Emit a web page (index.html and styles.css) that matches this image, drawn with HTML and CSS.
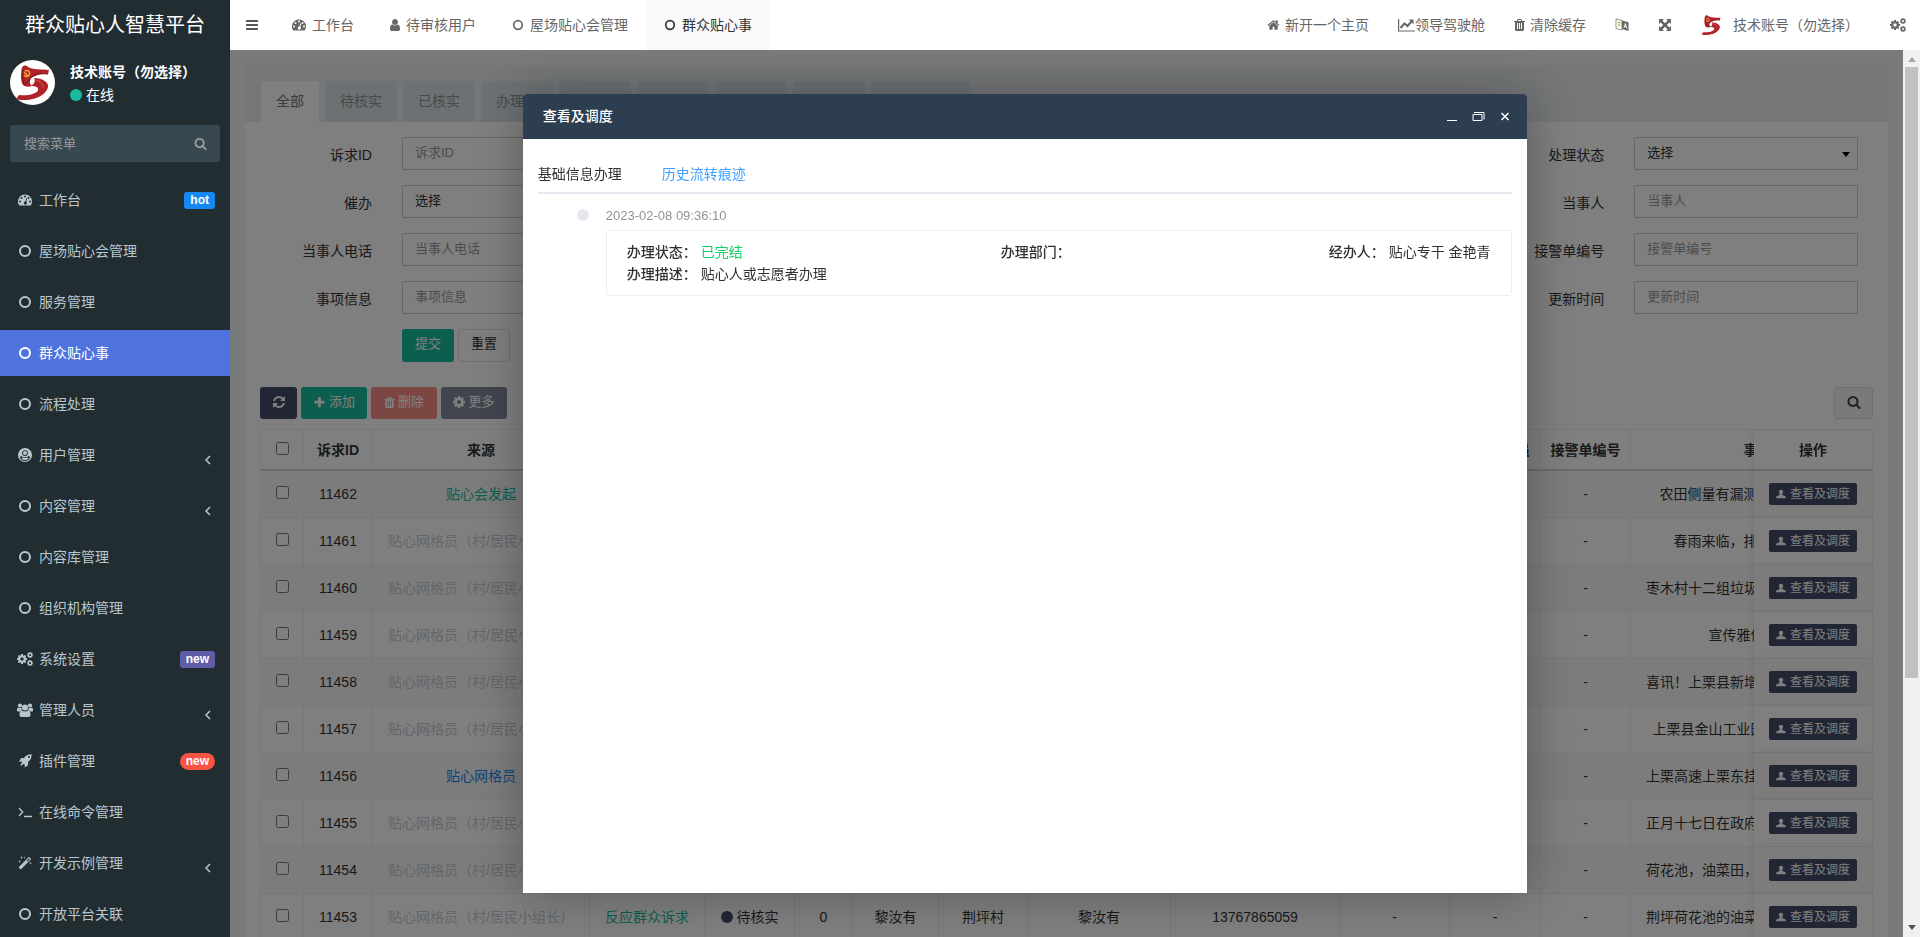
FILE: index.html
```html
<!DOCTYPE html>
<html lang="zh-CN">
<head>
<meta charset="utf-8">
<title>群众贴心人智慧平台</title>
<link rel="stylesheet" href="styles.css">
</head>
<body>
<svg class="sprite" aria-hidden="true">
  <symbol id="i-bars" viewBox="0 0 1792 1792"><path d="M1664 1344v128q0 26-19 45t-45 19h-1408q-26 0-45-19t-19-45v-128q0-26 19-45t45-19h1408q26 0 45 19t19 45zm0-512v128q0 26-19 45t-45 19h-1408q-26 0-45-19t-19-45v-128q0-26 19-45t45-19h1408q26 0 45 19t19 45zm0-512v128q0 26-19 45t-45 19h-1408q-26 0-45-19t-19-45v-128q0-26 19-45t45-19h1408q26 0 45 19t19 45z"/></symbol>
  <symbol id="i-search" viewBox="0 0 1792 1792"><path d="M1216 832q0-185-131.500-316.500t-316.500-131.500-316.500 131.500-131.500 316.500 131.500 316.500 316.500 131.500 316.500-131.500 131.500-316.500zm512 832q0 52-38 90t-90 38q-54 0-90-38l-343-342q-179 124-399 124-143 0-273.500-55.500t-225-150-150-225-55.500-273.500 55.500-273.500 150-225 225-150 273.500-55.500 273.500 55.500 225 150 150 225 55.500 273.500q0 220-124 399l343 343q37 37 37 90z"/></symbol>
  <symbol id="i-home" viewBox="0 0 1792 1792"><path d="M1472 992v480q0 26-19 45t-45 19h-384v-384h-256v384h-384q-26 0-45-19t-19-45v-480q0-1 .5-3t.5-3l575-474 575 474q1 2 1 6zm223-69l-62 74q-8 9-21 11h-3q-13 0-21-7l-692-577-692 577q-12 8-24 7-13-2-21-11l-62-74q-8-10-7-23.500t11-21.500l719-599q32-26 76-26t76 26l244 204v-195q0-14 9-23t23-9h192q14 0 23 9t9 23v408l219 182q10 8 11 21.500t-7 23.500z"/></symbol>
  <symbol id="i-plus" viewBox="0 0 1792 1792"><path d="M1600 736v192q0 40-28 68t-68 28h-416v416q0 40-28 68t-68 28h-192q-40 0-68-28t-28-68v-416h-416q-40 0-68-28t-28-68v-192q0-40 28-68t68-28h416v-416q0-40 28-68t68-28h192q40 0 68 28t28 68v416h416q40 0 68 28t28 68z"/></symbol>
  <symbol id="i-trash" viewBox="192 0 1408 1792"><path d="M704 1376v-704q0-14-9-23t-23-9h-64q-14 0-23 9t-9 23v704q0 14 9 23t23 9h64q14 0 23-9t9-23zm256 0v-704q0-14-9-23t-23-9h-64q-14 0-23 9t-9 23v704q0 14 9 23t23 9h64q14 0 23-9t9-23zm256 0v-704q0-14-9-23t-23-9h-64q-14 0-23 9t-9 23v704q0 14 9 23t23 9h64q14 0 23-9t9-23zm-544-992h448l-48-117q-7-9-17-11h-317q-10 2-17 11zm928 32v64q0 14-9 23t-23 9h-96v948q0 83-47 143.500t-113 60.500h-832q-66 0-113-58.500t-47-141.500v-952h-96q-14 0-23-9t-9-23v-64q0-14 9-23t23-9h309l70-167q15-37 54-63t79-26h320q40 0 79 26t54 63l70 167h309q14 0 23 9t9 23z"/></symbol>
  <symbol id="i-cog" viewBox="128 128 1536 1536"><path d="M1152 896q0-106-75-181t-181-75-181 75-75 181 75 181 181 75 181-75 75-181zm512-109v222q0 12-8 23t-20 13l-185 28q-19 54-39 91 35 50 107 138 10 12 10 25t-9 23q-27 37-99 108t-94 71q-12 0-26-9l-138-108q-44 23-91 38-16 136-29 186-7 28-36 28h-222q-14 0-24.500-8.500t-11.500-21.500l-28-184q-49-16-90-37l-141 107q-10 9-25 9-14 0-25-11-126-114-165-168-7-10-7-23 0-12 8-23 15-21 51-66.500t54-70.500q-27-50-41-99l-183-27q-13-2-21-12.500t-8-23.500v-222q0-12 8-23t19-13l186-28q14-46 39-92-40-57-107-138-10-12-10-24 0-10 9-23 26-36 98.500-107.500t94.500-71.500q13 0 26 10l138 107q44-23 91-38 16-136 29-186 7-28 36-28h222q14 0 24.500 8.500t11.500 21.500l28 184q49 16 90 37l142-107q9-9 24-9 13 0 25 10 129 119 165 170 7 8 7 22 0 12-8 23-15 21-51 66.500t-54 70.500q26 50 41 98l183 28q13 2 21 12.500t8 23.500z"/></symbol>
  <symbol id="i-cogs" viewBox="0 0 16 14"><use href="#i-cog" x="0" y="2" width="10" height="10"/><use href="#i-cog" x="10" y="0" width="6" height="6"/><use href="#i-cog" x="10" y="8" width="6" height="6"/></symbol>
  <symbol id="i-refresh" viewBox="128 128 1536 1536"><path d="M1639 1056q0 5-1 7-64 268-268 434.500t-478 166.500q-146 0-282.500-55t-243.500-157l-129 129q-19 19-45 19t-45-19-19-45v-448q0-26 19-45t45-19h448q26 0 45 19t19 45-19 45l-137 137q71 66 161 102t187 36q134 0 250-65t186-179q11-17 53-117 8-23 30-23h192q13 0 22.500 9.500t9.500 22.500zm25-800v448q0 26-19 45t-45 19h-448q-26 0-45-19t-19-45 19-45l138-138q-148-137-349-137-134 0-250 65t-186 179q-11 17-53 117-8 23-30 23h-199q-13 0-22.500-9.500t-9.500-22.500v-7q65-268 270-434.500t480-166.500q146 0 284 55.500t245 156.500l130-129q19-19 45-19t45 19 19 45z"/></symbol>
  <symbol id="i-user" viewBox="256 0 1280 1792"><path d="M1536 1399q0 109-62.500 187t-150.500 78h-854q-88 0-150.500-78t-62.500-187q0-85 8.500-160.500t31.500-152 58.500-131 94-89 134.500-34.500q131 128 313 128t313-128q76 0 134.500 34.500t94 89 58.500 131 31.500 152 8.500 160.500zm-256-887q0 159-112.500 271.500t-271.500 112.500-271.500-112.500-112.500-271.500 112.500-271.500 271.500-112.500 271.500 112.500 112.500 271.500z"/></symbol>
  <symbol id="i-person" viewBox="0 0 14 14"><path d="M7 1a3 3 0 0 1 3 3c0 1.500-.8 2.300-1.200 3-.3.700 0 1.300.8 1.600L13 10c.6.300.8.800.8 1.500V13H.2v-1.500C.2 10.800.5 10.300 1 10l3.400-1.400c.8-.3 1.100-.9.800-1.600C4.800 6.300 4 5.500 4 4a3 3 0 0 1 3-3z"/></symbol>
  <symbol id="i-circle" viewBox="0 0 14 14"><circle cx="7" cy="7" r="5" fill="none" stroke="currentColor" stroke-width="2"/></symbol>
  <symbol id="i-dash" viewBox="0 0 14 14"><path fill-rule="evenodd" d="M7 1.500a7 7 0 0 1 7 7c0 1.400-.4 2.700-1.100 3.800-.2.200-.4.300-.6.300H1.700c-.2 0-.4-.1-.6-.3A7 7 0 0 1 7 1.500zM2 7.500a1 1 0 1 0 0 2 1 1 0 0 0 0-2zM3.500 4a1 1 0 1 0 0 2 1 1 0 0 0 0-2zM7 2.500a1 1 0 1 0 0 2 1 1 0 0 0 0-2zM10.500 4a1 1 0 1 0 0 2 1 1 0 0 0 0-2zM12 7.500a1 1 0 1 0 0 2 1 1 0 0 0 0-2zM8.300 5.300l-.9 3.300a1.500 1.500 0 1 0 .9.300l.8-3.300z"/></symbol>
  <symbol id="i-usercircle" viewBox="0 0 14 14"><path fill-rule="evenodd" d="M7 0a7 7 0 1 1 0 14A7 7 0 0 1 7 0zM3.300 7.800c-.8.500-1.200 1.300-1.300 2.300a5.800 5.800 0 0 0 10 0c-.1-1-.5-1.800-1.300-2.300A4 4 0 0 1 7 9.300a4 4 0 0 1-3.700-1.500zM7 2.200a2.900 2.900 0 1 0 0 5.800 2.900 2.900 0 0 0 0-5.800z"/><circle cx="7" cy="5.100" r="2"/><path d="M3.500 10.500c.4-.8 1-1 1.500-1 1.200.8 2.800.8 4 0 .5 0 1.100.2 1.500 1a4.700 4.700 0 0 1-7 0z"/></symbol>
  <symbol id="i-users" viewBox="0 0 16 14"><circle cx="3" cy="2.500" r="2.100"/><circle cx="13" cy="2.500" r="2.100"/><circle cx="8" cy="4.500" r="3"/><path d="M0 8V6.500C0 5.300.7 4.500 1.500 4.500c1 .7 1.800.7 2.900.3 0 1.200.2 1.700.7 2.400-1 0-1.800.4-2.300 1.200H1.300C.5 8.400 0 8.500 0 8zM16 8V6.500c0-1.200-.7-2-1.500-2-1 .7-1.800.7-2.900.3 0 1.200-.2 1.700-.7 2.400 1 0 1.800.4 2.300 1.200h1.500c.8 0 1.300.1 1.300-.4zM2.500 12c0-2.500.6-4.500 2.500-4.500 1.800 1.400 4.200 1.400 6 0 1.900 0 2.500 2 2.500 4.500 0 1.200-.8 2-2 2h-7c-1.200 0-2-.8-2-2z"/></symbol>
  <symbol id="i-rocket" viewBox="0 0 14 14"><path fill-rule="evenodd" d="M13.600.3C10 .2 8 1.300 6 4L3 4.300.8 7.700l2.800-.2.400.9-1.600 2.800.6.600 2.700-1.700 1 .4.100 3 3.300-2.300L10 8c2.700-2 3.800-4.200 3.600-7.700zM11 2a1 1 0 1 1 0 2 1 1 0 0 1 0-2z"/></symbol>
  <symbol id="i-terminal" viewBox="0 0 14 14"><path d="M1 3l3.700 4L1 11M6 11.500h8" fill="none" stroke="currentColor" stroke-width="1.300"/></symbol>
  <symbol id="i-magic" viewBox="0 0 14 14"><path fill-rule="evenodd" d="M11 .8l2.200 2.200L2.800 13.400.6 11.200zM11 2.200L8.500 4.700l.8.800L11.800 3zM3.500 0l.4 1.200 1.200.4-1.200.4-.4 1.200L3.100 2l-1.200-.4 1.200-.4zM6.800.5l.3.900.9.300-.9.300-.3.900-.3-.9-.9-.3.900-.3zM1.700 4l.4 1 1 .4-1 .4-.4 1-.4-1-1-.4 1-.4zM12.500 5.500l.3 1.200 1.200.4-1.200.4-.3 1.200-.4-1.200-1.100-.4 1.100-.4z"/></symbol>
  <symbol id="i-left" viewBox="0 0 8 12"><path d="M6 2L2 6l4 4" fill="none" stroke="currentColor" stroke-width="1.500"/></symbol>
  <symbol id="i-chart" viewBox="0 0 17 14"><path d="M.6 1v12H17" fill="none" stroke="currentColor" stroke-width="1.200"/><path d="M2.500 10l4-4.500 3 2.500 4-4.500" fill="none" stroke="currentColor" stroke-width="2"/><path d="M15.500 1.500v4.700l-4.700-4.700z"/></symbol>
  <symbol id="i-lang" viewBox="0 0 14 14"><path d="M7 2.500l6.500 1.700V13L7 11z"/><path d="M7 2.500L1 1v9.500l6 1.500z" fill="#fff" stroke="currentColor" stroke-width=".7"/><path d="M2.500 4.200l3 .6M4 3.500v1.200M5.200 5c-.3 1.800-1.300 2.800-2.700 3.500M3 5.500c.4 1.200 1.300 2 2.700 2.600" fill="none" stroke="#c99b3b" stroke-width=".8"/><path d="M9 9.800L10.300 5.500 12 10.500M9.500 8.400l1.900.5" fill="none" stroke="#fff" stroke-width=".9"/></symbol>
  <symbol id="i-expand" viewBox="0 0 14 14"><path d="M1 1h5L4.400 2.600 7 5.200l2.600-2.600L8 1h5v5l-1.600-1.600L8.800 7l2.600 2.600L13 8v5H8l1.600-1.600L7 8.800l-2.600 2.600L6 13H1V8l1.600 1.600L5.200 7 2.600 4.400 1 6z"/></symbol>
  <symbol id="i-logo" viewBox="5 4 35 37"><path d="M12 8c1-3 4-3 6-1 5 3 12 2 21 3l-1 4c-7-1-14 1-17 5-2 3-1 5 1 7-3 1-7 1-9-1-3-5-2-12-1-17z" fill="#b0222a"/><path d="M12 9c2 5 0 10 2 16l6-6c3-4 10-6 18-5" fill="none" stroke="#7c141a" stroke-width="1"/><path d="M24 18c8 0 15 4 14 9-1 7-12 13-23 13-4 0-6 0-9-1l3-4c9 1 18-1 19-5 1-3-3-4-7-4 3-2 5-5 3-8z" fill="#b0222a"/><path d="M26 20c4 1 8 4 7 8" fill="none" stroke="#d9585c" stroke-width="1"/><path d="M24 18c-3 0-4 3-2 5" fill="none" stroke="#fff" stroke-width="1.500"/><path d="M15 11a3 3 0 1 1-1 4M14 12l4 4" fill="none" stroke="#f0a52c" stroke-width="1.500"/></symbol>
</svg>

<div class="app">
  <aside class="sidebar">
    <h1 class="brand">群众贴心人智慧平台</h1>
    <div class="user-panel">
      <span class="avatar"><svg width="35" height="37"><use href="#i-logo"/></svg></span>
      <div>
        <p class="user-name">技术账号（勿选择）</p>
        <p class="user-state"><i class="dot"></i>在线</p>
      </div>
    </div>
    <form class="menu-search">
      <input type="text" placeholder="搜索菜单" aria-label="搜索菜单">
      <button type="button" aria-label="搜索"><svg width="13" height="13"><use href="#i-search"/></svg></button>
    </form>
    <nav class="menu">
      <a href="#"><svg class="mi"><use href="#i-dash"/></svg>工作台<span class="badge blue">hot</span></a>
      <a href="#"><svg class="mi"><use href="#i-circle"/></svg>屋场贴心会管理</a>
      <a href="#"><svg class="mi"><use href="#i-circle"/></svg>服务管理</a>
      <a href="#" class="active"><svg class="mi"><use href="#i-circle"/></svg>群众贴心事</a>
      <a href="#"><svg class="mi"><use href="#i-circle"/></svg>流程处理</a>
      <a href="#"><svg class="mi"><use href="#i-usercircle"/></svg>用户管理<svg class="chev"><use href="#i-left"/></svg></a>
      <a href="#"><svg class="mi"><use href="#i-circle"/></svg>内容管理<svg class="chev"><use href="#i-left"/></svg></a>
      <a href="#"><svg class="mi"><use href="#i-circle"/></svg>内容库管理</a>
      <a href="#"><svg class="mi"><use href="#i-circle"/></svg>组织机构管理</a>
      <a href="#"><svg class="mi"><use href="#i-cogs"/></svg>系统设置<span class="badge purple">new</span></a>
      <a href="#"><svg class="mi"><use href="#i-users"/></svg>管理人员<svg class="chev"><use href="#i-left"/></svg></a>
      <a href="#"><svg class="mi"><use href="#i-rocket"/></svg>插件管理<span class="badge red">new</span></a>
      <a href="#"><svg class="mi"><use href="#i-terminal"/></svg>在线命令管理</a>
      <a href="#"><svg class="mi"><use href="#i-magic"/></svg>开发示例管理<svg class="chev"><use href="#i-left"/></svg></a>
      <a href="#"><svg class="mi"><use href="#i-circle"/></svg>开放平台关联</a>
    </nav>
  </aside>

  <div class="main">
    <header class="topbar">
      <button type="button" class="toggle" aria-label="菜单"><svg width="14" height="14"><use href="#i-bars"/></svg></button>
      <nav class="page-tabs">
        <a href="#"><svg width="14" height="14"><use href="#i-dash"/></svg>工作台</a>
        <a href="#"><svg width="10" height="14"><use href="#i-user"/></svg>待审核用户</a>
        <a href="#"><svg width="12" height="14"><use href="#i-circle"/></svg>屋场贴心会管理</a>
        <a href="#" class="active"><svg width="12" height="14"><use href="#i-circle"/></svg>群众贴心事</a>
      </nav>
      <nav class="tools">
        <a href="#"><svg width="13" height="14"><use href="#i-home"/></svg>新开一个主页</a>
        <a href="#" class="tight"><svg width="17" height="14"><use href="#i-chart"/></svg>领导驾驶舱</a>
        <a href="#"><svg width="11" height="14"><use href="#i-trash"/></svg>清除缓存</a>
        <a href="#" aria-label="语言"><svg width="14" height="14"><use href="#i-lang"/></svg></a>
        <a href="#" aria-label="全屏"><svg width="14" height="14"><use href="#i-expand"/></svg></a>
        <a href="#" class="account"><svg width="20" height="22"><use href="#i-logo"/></svg>技术账号（勿选择）</a>
        <a href="#" aria-label="设置"><svg width="16" height="14"><use href="#i-cogs"/></svg></a>
      </nav>
    </header>

    <div class="frame">
      <div class="view">
        <section class="panel">
          <nav class="status-tabs">
            <a href="#" class="active">全部</a><a href="#">待核实</a><a href="#">已核实</a><a href="#">办理中</a><a href="#">已办理</a><a href="#">已完结</a><a href="#">已退回</a><a href="#">已转交</a><a href="#">群众不满意</a>
          </nav>
          <div class="panel-body">
            <form class="filters">
              <div class="field"><label for="f1">诉求ID</label><input id="f1" type="text" placeholder="诉求ID"></div>
              <div class="field"><label for="f2">来源</label><input id="f2" type="text" placeholder="来源"></div>
              <div class="field"><label for="f3">诉求类型</label><input id="f3" type="text" placeholder="诉求类型"></div>
              <div class="field"><label for="f4">处理状态</label><span class="pick"><select id="f4"><option>选择</option></select></span></div>
              <div class="field"><label for="f5">催办</label><span class="pick"><select id="f5"><option>选择</option></select></span></div>
              <div class="field"><label for="f6">上报人</label><input id="f6" type="text" placeholder="上报人"></div>
              <div class="field"><label for="f7">所属村</label><input id="f7" type="text" placeholder="所属村"></div>
              <div class="field"><label for="f8">当事人</label><input id="f8" type="text" placeholder="当事人"></div>
              <div class="field"><label for="f9">当事人电话</label><input id="f9" type="text" placeholder="当事人电话"></div>
              <div class="field"><label for="f10">地址</label><input id="f10" type="text" placeholder="地址"></div>
              <div class="field"><label for="f11">经办人</label><input id="f11" type="text" placeholder="经办人"></div>
              <div class="field"><label for="f12">接警单编号</label><input id="f12" type="text" placeholder="接警单编号"></div>
              <div class="field"><label for="f13">事项信息</label><input id="f13" type="text" placeholder="事项信息"></div>
              <div class="field"><label for="f14">办理部门</label><input id="f14" type="text" placeholder="办理部门"></div>
              <div class="field"><label for="f15">创建时间</label><input id="f15" type="text" placeholder="创建时间"></div>
              <div class="field"><label for="f16">更新时间</label><input id="f16" type="text" placeholder="更新时间"></div>
              <div class="field"><span></span><div class="actions"><button type="button" class="btn green">提交</button><button type="button" class="btn plain">重置</button></div></div>
            </form>
            <div class="toolbar">
              <button type="button" class="btn navy icon" aria-label="刷新"><svg width="12" height="12"><use href="#i-refresh"/></svg></button>
              <button type="button" class="btn green tool"><svg width="13" height="13"><use href="#i-plus"/></svg>添加</button>
              <button type="button" class="btn red tool off"><svg width="11" height="13"><use href="#i-trash"/></svg>删除</button>
              <button type="button" class="btn navy tool off"><svg width="12" height="12"><use href="#i-cog"/></svg>更多</button>
              <button type="button" class="btn grey icon end" aria-label="搜索"><svg width="14" height="14"><use href="#i-search"/></svg></button>
            </div>
            <div class="table-wrap">
              <table class="data">
                <colgroup><col class="w43"><col class="w69"><col class="w217"><col class="w115"><col class="w90"><col class="w58"><col class="w86"><col class="w89"><col class="w143"><col class="w169"><col class="w110"><col class="w91"><col class="w90"><col class="w282"><col class="w119"></colgroup>
                <thead><tr><th><input type="checkbox" aria-label="全选"></th><th>诉求ID</th><th>来源</th><th>诉求类型</th><th>处理状态</th><th>催办</th><th>上报人</th><th>所属村</th><th>当事人</th><th>当事人电话</th><th>办理部门</th><th>经办网格员</th><th>接警单编号</th><th>事项信息</th><th class="fixed">操作</th></tr></thead>
                <tbody id="rows"></tbody>
              </table>
            </div>
          </div>
        </section>

        <div class="shade">
          <section class="dialog" role="dialog" aria-labelledby="dlg-title">
            <header class="dialog-head">
              <h2 id="dlg-title">查看及调度</h2>
              <button type="button" aria-label="最小化"><svg width="12" height="12"><path d="M1 9.500h10" stroke="currentColor"/></svg></button>
              <button type="button" aria-label="最大化"><svg width="13" height="12"><path d="M1 3.500h9v6H1z" fill="none" stroke="currentColor"/><path d="M2 1.500h10v7" fill="none" stroke="currentColor"/></svg></button>
              <button type="button" aria-label="关闭"><svg width="12" height="12"><path d="M2.500 2l7 7M9.500 2l-7 7" stroke="currentColor" stroke-width="1.500"/></svg></button>
            </header>
            <div class="dialog-body">
              <nav class="dialog-tabs"><a href="#">基础信息办理</a><a href="#" class="active">历史流转痕迹</a></nav>
              <ol class="timeline">
                <li>
                  <time>2023-02-08 09:36:10</time>
                  <div class="card">
                    <div class="line"><p><b>办理状态：</b><span class="done">已完结</span></p><p><b>办理部门：</b></p><p><b>经办人：</b><span>贴心专干 金艳青</span></p></div>
                    <div class="line"><p><b>办理描述：</b><span>贴心人或志愿者办理</span></p></div>
                  </div>
                </li>
              </ol>
            </div>
          </section>
        </div>
      </div>
      <div class="scroll" aria-hidden="true"><i class="up"></i><i class="thumb"></i><i class="down"></i></div>
    </div>
  </div>
</div>
<script src="app.js"></script>
</body>
</html>
```

FILE: styles.css
```css
* { box-sizing: border-box; }
body {
  margin: 0;
  font: 14px/20px "Liberation Sans", "Noto Sans CJK SC", sans-serif;
  color: #333;
}
a { color: inherit; text-decoration: none; }
h1, h2, p, ol { margin: 0; padding: 0; font-weight: 400; }
button, input, select { font: inherit; }
button { cursor: pointer; }
svg { fill: currentColor; flex: none; }
.sprite { position: absolute; width: 0; height: 0; }

.app { display: grid; grid-template-columns: 230px minmax(0, 1fr); height: 100vh; overflow: hidden; }

/* Sidebar */
.sidebar { background: #222d32; color: #b8c7ce; overflow: hidden; }
.brand { height: 50px; font-size: 20px; line-height: 50px; text-align: center; color: #fff; }
.user-panel { display: flex; gap: 15px; padding: 10px; color: #fff; }
.avatar { display: flex; align-items: center; justify-content: center; width: 45px; height: 45px; border-radius: 50%; background: #fff; }
.user-name { font-weight: 700; line-height: 24px; }
.user-state { display: flex; align-items: center; gap: 4px; line-height: 22px; }
.dot { width: 12px; height: 12px; border-radius: 50%; background: #18bc9c; }
.menu-search { display: flex; align-items: center; margin: 9px 10px 10px; height: 37px; border-radius: 3px; background: #374850; }
.menu-search input { flex: 1; min-width: 0; padding: 0 14px; border: 0; background: none; font-size: 13px; color: #fff; }
.menu-search input::placeholder { color: #999; opacity: 1; }
.menu-search button { display: flex; padding: 0 13px; border: 0; background: none; color: #999; }
.menu { display: flex; flex-direction: column; gap: 5px; padding-top: 5px; }
.menu a { display: flex; align-items: center; gap: 6px; height: 46px; padding: 0 15px 0 17px; flex: none; }
.menu a.active { background: #4e73df; color: #fff; }
.mi { width: 16px; height: 14px; }
.chev { width: 8px; height: 12px; margin: 9px 3px 0 auto; }
.badge { margin-left: auto; padding: 0 6px; border-radius: 3px; font-size: 12px; font-weight: 700; line-height: 17px; color: #fff; }
.blue { background: #1688f1; }
.purple { background: #605ca8; }
.badge.red { border-radius: 9px; background: #f75444; }

/* Top bar */
.main { display: flex; flex-direction: column; min-width: 0; min-height: 0; }
.topbar { display: flex; height: 50px; padding-right: 14px; background: #fff; color: #666; }
.topbar a { display: flex; align-items: center; gap: 5px; white-space: nowrap; }
.toggle { display: flex; align-items: center; width: 44px; padding: 0 0 0 15px; border: 0; background: none; color: #555; }
.page-tabs { display: flex; }
.page-tabs a { gap: 6px; padding: 0 18px; }
.page-tabs .active { background: #f9f9f9; color: #333; }
.tools { display: flex; gap: 29px; margin-left: auto; }
.tools .tight { gap: 0; }
.tools .account { gap: 12px; padding-right: 2px; }

/* Page */
.frame { display: flex; flex: 1; min-height: 0; }
.view { position: relative; flex: 1; min-width: 0; padding: 15px; overflow: hidden; background: #f1f4f6; }
.panel { background: #fff; }
.status-tabs { display: flex; gap: 6px; padding: 16px 16px 0; background: #e8edf0; color: #8a959b; }
.status-tabs a { padding: 10px 15px 11px; background: #dce3e6; border-radius: 3px 3px 0 0; }
.status-tabs a.active { background: #fff; color: #777; }
.panel-body { padding: 15px; }
.filters { display: grid; grid-template-columns: repeat(4, minmax(0, 1fr)); gap: 15px 30px; }
.field { display: grid; grid-template-columns: 1fr 2fr; align-items: center; }
.field > :last-child { margin: 0 15px; }
.field label { padding: 2px 15px 0 0; text-align: right; white-space: nowrap; }
.field input, .field select { min-width: 0; height: 33px; padding: 0 12px 2px; border: 1px solid #ccc; border-radius: 2px; background: #fff; font-size: 13px; color: #333; }
.field input::placeholder { color: #999; opacity: 1; }
.pick { position: relative; display: flex; }
.pick select { flex: 1; appearance: none; }
.pick::after { content: ""; position: absolute; right: 8px; top: 15px; border: 4px solid transparent; border-top: 5px solid #000; border-bottom: 0; }
.actions, .toolbar { display: flex; gap: 4px; }
.toolbar { margin: 25px 0 10px; }
.btn { display: flex; align-items: center; justify-content: center; gap: 3px; height: 32px; padding: 0 12px 2px; border: 0; border-radius: 3px; font-size: 13px; color: #fff; }
.actions .btn { height: 33px; padding: 0 13px 3px; }
.green { background: #18bc9c; }
.navy { background: #444c69; }
.btn.red { background: #f75444; }
.off { opacity: .65; }
.btn.plain { padding: 0 12px 3px; border: 1px solid #ddd; background: #fff; color: #333; }
.btn.grey { border: 1px solid #ddd; background: #f4f4f4; color: #444; }
.btn.icon { width: 37px; }
.btn.tool { width: 66px; }
.btn.end { width: 39px; margin-left: auto; }

/* Table */
.table-wrap { overflow: hidden; }
.data { width: 1771px; table-layout: fixed; border-spacing: 0; border-top: 1px solid #f0f0f0; border-left: 1px solid #f0f0f0; text-align: center; }
.data th, .data td { padding: 0 15px; border-right: 1px solid #f0f0f0; border-bottom: 1px solid #f0f0f0; white-space: nowrap; overflow: hidden; text-overflow: ellipsis; background: #fff; }
.data th { height: 41px; padding: 0 6px; border-bottom: 2px solid #d8d8d8; }
.data td { height: 47px; }
.data th:first-child, .data td:first-child, .data td:nth-child(5) { padding: 0; }
.data tbody tr:nth-child(odd) td { background: #f9f9f9; }
.data .fixed { position: sticky; right: 0; box-shadow: -1px 0 8px rgba(0, 0, 0, .08); }
.data input { width: 13px; height: 13px; margin: 0; vertical-align: 0; }
.data td .mark { display: inline-block; width: 12px; height: 12px; margin-right: 4px; border-radius: 50%; background: #444c69; vertical-align: -1px; }
.teal { color: #18bc9c; }
.sky { color: #1688f1; }
.pale { color: #c8ccd4; }
.view-btn { display: inline-flex; align-items: center; gap: 4px; height: 22px; padding: 0 7px 1px; border: 0; border-radius: 2px; background: #444c69; font-size: 12px; color: #fff; }
.w43 { width: 43px; } .w69 { width: 69px; } .w217 { width: 217px; } .w115 { width: 115px; }
.w90 { width: 90px; } .w58 { width: 58px; } .w86 { width: 86px; } .w89 { width: 89px; }
.w143 { width: 143px; } .w169 { width: 169px; } .w110 { width: 110px; } .w91 { width: 91px; }
.w282 { width: 282px; } .w119 { width: 119px; }

/* Dialog */
.shade { position: absolute; inset: 0; z-index: 5; background: rgba(0, 0, 0, .5); }
.dialog { position: absolute; left: 17.5%; top: 5%; width: 60%; height: 90%; border-radius: 3px 3px 0 0; background: #fff; box-shadow: 1px 1px 50px rgba(0, 0, 0, .3); }
.dialog-head { display: flex; align-items: center; gap: 14px; height: 45px; padding: 0 16px 0 20px; border-radius: 3px 3px 0 0; background: #2c3e50; color: #fff; }
.dialog-head h2 { flex: 1; font-size: 14px; padding-bottom: 2px; font-weight: 500; }
.dialog-head button { display: flex; padding: 0; border: 0; background: none; color: #fff; }
.dialog-body { padding: 15px; }
.dialog-tabs { display: flex; gap: 40px; border-bottom: 2px solid #e4e7ed; line-height: 38px; color: #303133; }
.dialog-tabs a { padding-top: 1px; margin-bottom: -1px; }
.dialog-tabs .active { color: #409eff; }
.timeline { list-style: none; padding: 13px 0 0 39px; }
.timeline li { position: relative; padding-left: 29px; }
.timeline li::before { content: ""; position: absolute; left: 0; top: 2px; width: 12px; height: 12px; border-radius: 50%; background: #e4e7ed; }
.timeline time { display: block; font-size: 13px; line-height: 18px; color: #909399; }
.card { margin-top: 5px; padding: 10px 20px; border: 1px solid #ebeef5; border-radius: 3px; color: #303133; }
.line { display: flex; justify-content: space-between; line-height: 22px; }
.line p { display: flex; gap: 4px; }
.line b { font-weight: 500; }
.done { color: #13ce66; }

/* Scrollbar */
.scroll { display: flex; flex-direction: column; align-items: center; width: 17px; padding: 7px 0; background: #f1f1f1; }
.thumb { width: 13px; height: 70%; margin: 5px 0 auto; background: #c1c1c1; }
.up, .down { border: 4px solid transparent; }
.up { border-bottom: 5px solid #a3a3a3; border-top: 0; }
.down { border-top: 5px solid #505050; border-bottom: 0; }
```

FILE: app.js
```js
const group = '贴心网格员（村/居民小组长）';
const items = [
  ['11462', '贴心会发起', 'teal', '农田侧量有漏测情况请尽快核实处理'],
  ['11461', group, 'pale', '春雨来临，排查房屋安全隐患点'],
  ['11460', group, 'pale', '枣木村十二组垃圾堆放较多需要及时清理运走'],
  ['11459', group, 'pale', '宣传雅俗共赏新文化'],
  ['11458', group, 'pale', '喜讯！上栗县新增一批便民服务站点方便群众'],
  ['11457', group, 'pale', '上栗县金山工业园区路面破损需要维修'],
  ['11456', '贴心网格员', 'sky', '上栗高速上栗东挂线路段绿化带需要安排修剪'],
  ['11455', group, 'pale', '正月十七日在政府门口开展便民服务志愿活动'],
  ['11454', group, 'pale', '荷花池，油菜田，道路两旁的垃圾已清理干净'],
  ['11453', group, 'pale', '荆坪荷花池的油菜花已经开放欢迎大家来观赏']
];
document.getElementById('rows').innerHTML = items.map(([id, source, tone, title]) => `<tr>
  <td><input type="checkbox" aria-label="选择 ${id}"></td>
  <td>${id}</td>
  <td class="${tone}">${source}</td>
  <td class="teal">反应群众诉求</td>
  <td><i class="mark"></i>待核实</td>
  <td>0</td><td>黎汝有</td><td>荆坪村</td><td>黎汝有</td><td>13767865059</td>
  <td>-</td><td>-</td><td>-</td>
  <td>${title}</td>
  <td class="fixed"><button type="button" class="view-btn"><svg width="10" height="10"><use href="#i-person"/></svg>查看及调度</button></td>
</tr>`).join('');
```
